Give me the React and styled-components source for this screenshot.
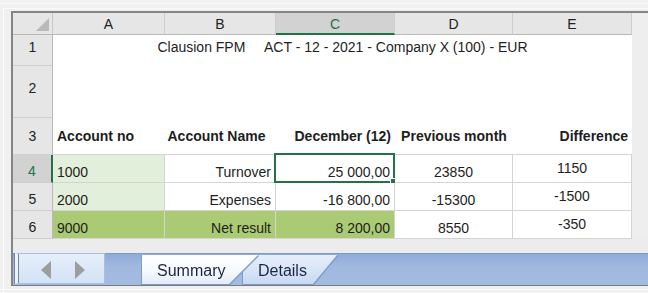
import React from 'react';
import styled, { createGlobalStyle } from 'styled-components';

const GREEN = '#217346';
const GRID = '#d4d4d4';

const GlobalStyle = createGlobalStyle`
  html, body {
    margin: 0;
    padding: 0;
    background: #f0f0f0;
    overflow: hidden;
  }
  body {
    font-family: "Liberation Sans", Arial, sans-serif;
    font-size: 14px;
    color: #1e1e1e;
  }
`;

const columns = ['A', 'B', 'C', 'D', 'E'];

const dataRows = [
  {
    n: 4,
    active: true,
    cells: [
      { text: '1000', align: 'left', bg: '#e2efda' },
      { text: 'Turnover', align: 'right' },
      { text: '25 000,00', align: 'right', selected: true },
      { text: '23850', align: 'center' },
      { text: '1150', align: 'center', valign: 'middle' },
    ],
  },
  {
    n: 5,
    cells: [
      { text: '2000', align: 'left', bg: '#e2efda' },
      { text: 'Expenses', align: 'right' },
      { text: '-16 800,00', align: 'right' },
      { text: '-15300', align: 'center' },
      { text: '-1500', align: 'center', valign: 'middle' },
    ],
  },
  {
    n: 6,
    cells: [
      { text: '9000', align: 'left', bg: '#abca74' },
      { text: 'Net result', align: 'right', bg: '#abca74' },
      { text: '8 200,00', align: 'right', bg: '#abca74' },
      { text: '8550', align: 'center' },
      { text: '-350', align: 'center', valign: 'middle' },
    ],
  },
];

const App = () => {
  return (
    <>
      <GlobalStyle />
      <Window>
        <InnerEdge>
          <Frame>
            <Sheet>
              <Corner>
                <CornerMark />
              </Corner>
              {columns.map((c) => (
                <ColHeader key={c} active={c === 'C'}>{c}</ColHeader>
              ))}
              <Filler />

              <RowHeader pad="top" padSize={4}>1</RowHeader>
              <TitleCell>Clausion FPM     ACT - 12 - 2021 - Company X (100) - EUR</TitleCell>

              <RowHeader pad="top" padSize={14}>2</RowHeader>
              <BlankRow />

              <RowHeader pad="middle">3</RowHeader>
              <LabelCell align="left">Account no</LabelCell>
              <LabelCell align="center" shift={8}>Account Name</LabelCell>
              <LabelCell align="right">December (12)</LabelCell>
              <LabelCell align="center">Previous month</LabelCell>
              <LabelCell align="right">Difference</LabelCell>

              {dataRows.map((row) => (
                <React.Fragment key={row.n}>
                  <RowHeader pad="bottom" active={row.active}>{row.n}</RowHeader>
                  {row.cells.map((cell, i) => (
                    <DataCell
                      key={i}
                      align={cell.align}
                      valign={cell.valign}
                      bg={cell.bg}
                    >
                      {cell.text}
                      {cell.selected && (
                        <Selection>
                          <FillHandle />
                        </Selection>
                      )}
                    </DataCell>
                  ))}
                </React.Fragment>
              ))}
            </Sheet>

            <Gap />

            <TabBar>
              <NavBox>
                <svg width="11" height="18" viewBox="0 0 11 18">
                  <polygon points="10,0 10,18 0,9" fill="#9d9d9d" />
                </svg>
                <svg width="11" height="18" viewBox="0 0 11 18">
                  <polygon points="1,0 1,18 11,9" fill="#9d9d9d" />
                </svg>
              </NavBox>
              <Tabs>
                <TabOutline front>
                  <Tab front width={116} cut={29}>Summary</Tab>
                </TabOutline>
                <TabOutline>
                  <Tab width={94} cut={24}>Details</Tab>
                </TabOutline>
              </Tabs>
            </TabBar>
          </Frame>
          <Footer />
        </InnerEdge>
      </Window>
    </>
  );
};

export default App;

const Window = styled.div`
  padding: 3px 0 0 0;
  height: 293px;
  box-sizing: border-box;
`;

const InnerEdge = styled.div`
  border-top: 1px solid #fbfbfb;
  padding-top: 4px;
  position: relative;
  &::before {
    content: '';
    display: block;
    border-top: 1px solid #fbfbfb;
    margin-left: 3px;
  }
  &::after {
    content: '';
    position: absolute;
    left: 3px;
    top: 5px;
    bottom: 0;
    border-left: 1px solid #fbfbfb;
  }
`;

const Frame = styled.div`
  margin: 2px 0 0 11px;
  border-top: 2px solid #858585;
  border-left: 2px solid #858585;
  border-bottom: 1px solid #7a7a7a;
  background: #ececec;
`;

const Sheet = styled.div`
  display: grid;
  grid-template-columns: 40px 112px 111px 119px 118px 119px 1fr;
  grid-template-rows: 22px 31px 52px 37px 28px 28px 28px;
  background: #ffffff;
`;

const Corner = styled.div`
  background: #e6e6e6;
  border-right: 1px solid #c8c8c8;
  border-bottom: 1px solid #b9b9b9;
  display: flex;
  justify-content: flex-end;
  align-items: flex-end;
  padding: 0 3px 3px 0;
`;

const CornerMark = styled.div`
  width: 13px;
  height: 13px;
  background: #b9b9b9;
  clip-path: polygon(100% 0, 100% 100%, 0 100%);
`;

const ColHeader = styled.div`
  display: flex;
  align-items: center;
  justify-content: center;
  background: ${(p) => (p.active ? '#d2d2d2' : '#e6e6e6')};
  color: ${(p) => (p.active ? GREEN : '#222')};
  border-right: 1px solid #cdcdcd;
  border-bottom: ${(p) => (p.active ? `2px solid ${GREEN}` : '1px solid #b9b9b9')};
  padding-top: 1px;
`;

const Filler = styled.div`
  grid-column: 7;
  grid-row: 1 / -1;
  background: #eeeeee;
`;

const RowHeader = styled.div`
  display: flex;
  justify-content: center;
  align-items: ${(p) =>
    p.pad === 'top' ? 'flex-start' : p.pad === 'bottom' ? 'flex-end' : 'center'};
  padding-top: ${(p) => (p.pad === 'top' ? `${p.padSize}px` : '0')};
  padding-bottom: ${(p) => (p.pad === 'bottom' ? '3px' : '0')};
  line-height: 16px;
  background: ${(p) => (p.active ? '#d2d2d2' : '#e6e6e6')};
  color: ${(p) => (p.active ? GREEN : '#222')};
  border-bottom: 1px solid #cfcfcf;
  border-right: ${(p) => (p.active ? `2px solid ${GREEN}` : '1px solid #b9b9b9')};
  box-sizing: border-box;
`;

const TitleCell = styled.div`
  grid-column: 2 / span 5;
  text-align: center;
  white-space: pre;
  line-height: 16px;
  padding-top: 4px;
  color: #1e1e1e;
`;

const BlankRow = styled.div`
  grid-column: 2 / span 5;
`;

const LabelCell = styled.div`
  display: flex;
  align-items: center;
  justify-content: ${(p) =>
    p.align === 'left' ? 'flex-start' : p.align === 'right' ? 'flex-end' : 'center'};
  padding: 0 ${(p) => 4 + (p.shift || 0)}px 0 4px;
  font-weight: bold;
  border-bottom: 1px solid ${GRID};
  white-space: nowrap;
`;

const DataCell = styled.div`
  position: relative;
  display: flex;
  align-items: ${(p) => (p.valign === 'middle' ? 'center' : 'flex-end')};
  justify-content: ${(p) =>
    p.align === 'left' ? 'flex-start' : p.align === 'right' ? 'flex-end' : 'center'};
  padding: 0 4px 2px;
  line-height: 16px;
  background: ${(p) => p.bg || '#ffffff'};
  border-right: 1px solid ${GRID};
  border-bottom: 1px solid ${GRID};
  white-space: nowrap;
`;

const Selection = styled.span`
  position: absolute;
  top: -2px;
  left: -2px;
  right: -1px;
  bottom: -1px;
  border: 2px solid ${GREEN};
  pointer-events: none;
`;

const FillHandle = styled.span`
  position: absolute;
  right: -4px;
  bottom: -4px;
  width: 5px;
  height: 5px;
  background: ${GREEN};
  border: 1px solid #ffffff;
`;

const Gap = styled.div`
  height: 14px;
  background: #ececec;
`;

const TabBar = styled.div`
  display: flex;
  align-items: flex-start;
  height: 32px;
  box-sizing: border-box;
  border-top: 1px solid #7b9bcf;
  background: linear-gradient(#8eaad8, #a1b9e0 40%, #a3bbe0);
`;

const NavBox = styled.div`
  margin-left: 2px;
  width: 90px;
  height: 31px;
  box-sizing: border-box;
  margin-top: -1px;
  display: flex;
  align-items: center;
  justify-content: space-around;
  padding: 3px 8px 0 12px;
  background: linear-gradient(#e6effb, #d3e2f6);
  border: 1px solid #a9bfdf;
  border-left: 3px solid #eef4fc;
  box-shadow: inset 1px 0 0 #6f86a8, -1px 0 0 #6f86a8;
`;

const Tabs = styled.div`
  display: flex;
  margin-left: 37px;
  padding-top: 1px;
`;

const TabOutline = styled.div`
  position: relative;
  z-index: ${(p) => (p.front ? 2 : 1)};
  margin-left: ${(p) => (p.front ? '0' : '-15px')};
  filter: drop-shadow(1px 0 0 #7d9ccb) drop-shadow(-1px 0 0 #7d9ccb)
    drop-shadow(0 1px 0 #7d9ccb);
`;

const Tab = styled.div`
  width: ${(p) => p.width}px;
  height: 29px;
  box-sizing: border-box;
  padding: 2px 0 0 15px;
  display: flex;
  align-items: center;
  font-size: 16px;
  color: #1d2540;
  clip-path: polygon(
    0 0,
    100% 0,
    ${(p) => p.width - p.cut}px 100%,
    0 100%
  );
  background: ${(p) =>
    p.front
      ? 'linear-gradient(#ffffff, #f4f8fd 60%, #e3ebf8)'
      : 'linear-gradient(#e6eefa, #d6e3f6 60%, #c7d8f2)'};
`;

const Footer = styled.div`
  height: 7px;
  border-top: 3px solid #f0f0f0;
  box-sizing: border-box;
  &::after {
    content: '';
    display: block;
    border-top: 1px solid #fbfbfb;
  }
`;
